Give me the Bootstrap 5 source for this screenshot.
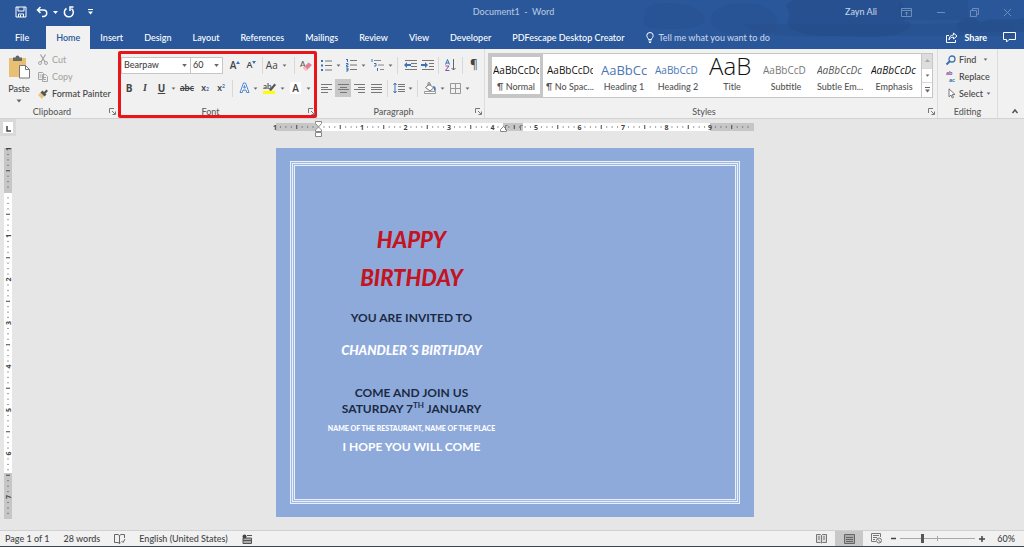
<!DOCTYPE html>
<html lang="en">
<head>
<meta charset="utf-8">
<meta name="viewport" content="width=device-width, initial-scale=1">
<title>Document1 - Word</title>
<link href="https://cdn.jsdelivr.net/npm/bootstrap@5.3.0/dist/css/bootstrap.min.css" rel="stylesheet">
<style>
:root{--ui:Lato,"Open Sans",sans-serif;--blue:#2a579a;--ink:#444;--accent:#3c72b4}
body{font:500 9px/12px var(--ui);color:var(--ink);background:#e6e6e6;overflow:hidden}
button,select,input{font:inherit;color:inherit}
button{padding:0;border:0;background:none;display:inline-flex;align-items:center;justify-content:center}
svg{display:block;flex:none;overflow:visible}
.topbar{background-color:var(--blue);color:#fff;position:relative}
.topbar>.deco{position:absolute;right:0;top:0;width:400px;height:49px;overflow:hidden}
.titlerow{height:24px;position:relative}
.quick{padding-left:15px;gap:5px}
.doctitle{color:#b4c6df}
.wincol{gap:24px;padding-right:12px;color:#6f8dba}
.wincol .user{color:#c4d3e8}
.tabrow{height:23px}
.tabrow .nav-link{color:#fff;padding:0 11px 0 10px;line-height:23px;border-radius:0;font-weight:500}
.tabrow .nav-link.active{background:#f1f1f1;color:#2a579a;font-weight:600;padding:0 10px}
.tabrow .nav-link.filetab{padding:0 17px 0 15px}
.titlerow+.tabrow{margin-top:2px}
.tell{color:#c4d3e8;gap:5px;padding-left:10px}
.ribbon{background:#f1f1f1;border-bottom:1px solid #d2d2d2;height:70px}
.grp{padding-top:7px;position:relative;border-right:1px solid #dcdcdc}
.grp-name{height:12px;line-height:12px;color:#5c5c5c;text-align:center;margin-top:auto;padding-right:14px}
.launch{position:absolute;right:2px;bottom:3px}
.tool{height:18px}
.toolrow2{margin-top:5px}
.w7{width:7px}.w11{width:11px}.w16{width:16px}.w17{width:17px}.w18{width:18px}.w20{width:20px}
.cut{color:#a6a6a6}
.cliprow{height:17px;gap:4px}
.vr-line{width:1px;height:17px;background:#d8d8d8;margin:0 3px}
.fontgrp{outline:3px solid #e8161b;outline-offset:-3px;border-radius:2px;border:0;padding:5px 3px 0;width:199px;margin:2px 0 0}
.combo{height:17px;padding:0 9px 0 2px;border:1px solid #c6c6c6;border-radius:0;color:#444;appearance:none;background:#fff url("data:image/svg+xml,%3Csvg xmlns='http://www.w3.org/2000/svg' viewBox='0 0 6 4'%3E%3Cpath d='M0 0h6L3 4z' fill='%23666'/%3E%3C/svg%3E") no-repeat right 3px center/5px 3px}
.combo-name{width:71px}.combo-size{width:33px;margin-left:-1px}
.pressed{background:#c8c8c8}
.glyph{font-family:"Open Sans",sans-serif;font-size:10px;font-weight:700}
.gallery{border:1px solid #c6c6c6;background:#fff;height:45px;margin:-3px 4px 0 3px}
.styleitem{flex:1 1 0;min-width:0;flex-direction:column;justify-content:flex-end;overflow:hidden;padding:0 4px}
.styleitem.on{box-shadow:inset 0 0 0 3px #c6c6c6}
.sample{font-family:"Open Sans",sans-serif;font-size:10px;line-height:20px;height:20px;width:100%;overflow:hidden;white-space:nowrap;color:#111;text-align:left}
.sname{line-height:14px;height:17px;white-space:nowrap;color:#555}
.sample-h{font-size:13px;color:#4a76b5}
.sample-h2{color:#4a76b5}
.sample-title{font-size:24px;height:24px;line-height:20px;font-weight:300}
.scrollcol{width:11px;border-left:1px solid #c6c6c6}
.scrollcol button{flex:1;border-bottom:1px solid #d8d8d8}
.editrow{height:17px;gap:3px}
.rulerrow{height:29px;padding-right:10px}
.corner{width:16px;height:17px;background:#d9d9d9;padding:3px}
.corner>span{width:10px;height:11px;background:#fff}
.leftcol{width:15px}
.sheetwidth{width:478px}
.sheet{width:478px;height:369px;background:#8eaadb;padding:13px 14px}
.frame-a,.frame-b,.frame-c{border:1px solid #e9f0fb;height:100%}
.frame-a,.frame-b{padding:1px;background:#a0b9e2}
.frame-c{background:#8eaadb}
.invite{width:234px;text-align:center;padding-top:55px;font-family:Lato,sans-serif;font-weight:700;color:#1b2a44;white-space:nowrap}
.brush{font-style:italic;font-weight:900}
.big{font-size:22px;line-height:38px;color:#c3141f}
.line12{font-size:12px;line-height:16px}
.line13{font-size:13px;line-height:16px}
.tiny{font-size:7px;line-height:22px;font-weight:900}
.gap-s{margin-top:13px}
.gap-l{margin-top:27px}
.white{color:#fff}
.invite sup{font-size:8px;top:-5px}
.status{height:17px;background:#f1f1f1;border-top:1px solid #d0d0d0;border-bottom:1px solid #3b4450;padding:0 9px 0 5px;gap:14px}
.zoomer{width:75px;height:11px;appearance:none;background:linear-gradient(#a8a8a8,#a8a8a8) center/100% 1px no-repeat,linear-gradient(#a8a8a8,#a8a8a8) center/1px 5px no-repeat;margin:0}
.zoomer::-webkit-slider-thumb{appearance:none;width:3px;height:9px;background:#555}
</style>
</head>
<body class="d-flex flex-column vh-100">

<svg width="0" height="0" class="position-absolute">
 <symbol id="dd" viewBox="0 0 6 4"><path d="M.5.5h5L3 3.5z" fill="#666"/></symbol>
 <symbol id="launch" viewBox="0 0 7 7"><path d="M.5 5V.5H5M3 3l3 3M6.500 3.500v3h-3" fill="none" stroke="#777"/></symbol>
</svg>

<header class="topbar">
 <svg class="deco" viewBox="0 0 400 49" aria-hidden="true" fill="#254d88">
  <path opacity=".3" d="M22 8c10-8 40-6 52 2s8 16-8 18-48 2-46-6zM90 12c10-12 52-12 60 2s-2 22-26 22-46-10-34-24z"/>
  <path opacity=".65" d="M170 0h104c8 6 10 14 6 22 8-2 10 6 0 10-20 8-50 4-76 4s-38-6-40-12 4-8 0-14 0-8 6-10z"/>
  <path opacity=".35" d="M120 24h180c30 0 60-4 90-2v14H210c-30 2-80 0-90-12zM274 0h70v20h-66z"/>
  <path opacity=".6" d="M334 24c4-8 16-8 22-2 14-6 30 0 44-4v14h-60c-6 0-8-4-6-8z"/>
 </svg>
 <div class="titlerow d-flex align-items-center">
  <div class="quick d-flex align-items-center col">
   <button aria-label="Save"><svg width="12" height="12" viewBox="0 0 12 12" fill="none" stroke="#fff"><path d="M1 1h10v10H1zM3 1v4h6V1M3.500 11V8h5v3M5.500 9v2"/></svg></button>
   <button aria-label="Undo" class="ms-1"><svg width="12" height="12" viewBox="0 0 12 12" fill="none" stroke="#fff" stroke-width="1.500"><path d="M4.500 1 1.500 4l3 3M2 4h5.500a3 3 0 0 1 0 6.500H6"/></svg></button>
   <svg width="5" height="3"><path d="M0 0h5L2.500 3z" fill="#fff"/></svg>
   <button aria-label="Redo"><svg width="12" height="12" viewBox="0 0 12 12" fill="none" stroke="#fff" stroke-width="1.500"><path d="M3.500 2.500a4.500 4.500 0 1 0 5 .2M10.500 1H7v4"/></svg></button>
   <button aria-label="Customize" class="ms-2"><svg width="5" height="6"><path d="M0 0h5v1H0zM0 2.500h5L2.500 5.500z" fill="#fff"/></svg></button>
  </div>
  <div class="doctitle">Document1 &nbsp;-&nbsp; Word</div>
  <div class="wincol d-flex align-items-center justify-content-end col">
   <span class="user">Zayn Ali</span>
   <button aria-label="Ribbon display"><svg width="11" height="9" fill="none" stroke="currentColor"><path d="M.5.500h10v8H.5zM.5 2.500h10M5.500 7.500V4M4 5.500l1.500-1.500L7 5.500"/></svg></button>
   <button aria-label="Minimize"><svg width="10" height="9" stroke="currentColor"><path d="M1 4.500h8"/></svg></button>
   <button aria-label="Restore"><svg width="9" height="9" fill="none" stroke="currentColor"><path d="M.5 2.500h6v6h-6zM2.500 2.500v-2h6v6h-2"/></svg></button>
   <button aria-label="Close"><svg width="9" height="9" stroke="currentColor"><path d="m1 1 7 7M8 1 1 8"/></svg></button>
  </div>
 </div>
 <nav class="tabrow nav flex-nowrap align-items-center position-relative">
  <a class="nav-link filetab" href="#">File</a>
  <a class="nav-link active" href="#">Home</a>
  <a class="nav-link" href="#">Insert</a>
  <a class="nav-link" href="#">Design</a>
  <a class="nav-link" href="#">Layout</a>
  <a class="nav-link" href="#">References</a>
  <a class="nav-link" href="#">Mailings</a>
  <a class="nav-link" href="#">Review</a>
  <a class="nav-link" href="#">View</a>
  <a class="nav-link" href="#">Developer</a>
  <a class="nav-link" href="#">PDFescape Desktop Creator</a>
  <button class="tell"><svg width="8" height="11" viewBox="0 0 8 11" fill="none" stroke="#fff"><path d="M2.500 7.500C2.500 6 .8 5.500.8 3.700a3.200 3.200 0 0 1 6.400 0C7.200 5.500 5.500 6 5.500 7.500zM2.500 9h3M3 10.500h2"/></svg>Tell me what you want to do</button>
  <div class="ms-auto d-flex align-items-center gap-3 pe-2">
   <button class="gap-1 fw-bold"><svg width="12" height="11" viewBox="0 0 12 11" fill="none" stroke="#fff"><path d="M3 3.500H.5v7h9V8M7.500 1l3.500 3-3.500 3V5.200C5 5 4 6 3 8c0-3 1.500-5 4.500-5z"/></svg>&nbsp;Share</button>
   <button aria-label="Comments"><svg width="13" height="11" viewBox="0 0 13 11" fill="none" stroke="#fff"><path d="M.5.500h12v7H6L3.500 10V7.500h-3z"/></svg></button>
  </div>
 </nav>
</header>

<section class="ribbon d-flex">
 <div class="grp d-flex flex-column border-0 pb-0" style="width:118px">
  <div class="d-flex ps-2">
   <button class="flex-column gap-1" style="width:22px"><svg width="22" height="23" viewBox="0 0 22 23"><path d="M1 2h17v19H1z" fill="#e9c073"/><path d="M5 1.500h2.500a2 2 0 0 1 4 0H14V5H5z" fill="#666"/><path d="M11.500 9.500h6l4 4v8.500h-10z" fill="#fff" stroke="#777"/><path d="M17.500 9.500v4h4" fill="none" stroke="#777"/></svg>Paste<svg width="6" height="4"><use href="#dd"/></svg></button>
   <div class="ms-2" style="margin-top:-5px">
    <button class="cliprow cut d-flex"><svg width="10" height="11" viewBox="0 0 10 11" fill="none" stroke="#a6a6a6"><circle cx="2" cy="9" r="1.500"/><circle cx="8" cy="9" r="1.500"/><path d="m3 8 4.500-7.500M7 8 2.500.5" stroke-width="1.300"/></svg>Cut</button>
    <button class="cliprow cut d-flex"><svg width="10" height="10" viewBox="0 0 10 10" fill="#f1f1f1" stroke="#a6a6a6"><path d="M.5.500h4l1 1v6h-5zM4.500 2.500h3l2 2v5h-5zM6 5.500h2M6 7.500h2M1.500 3h2M1.500 5h2"/></svg>Copy</button>
    <button class="cliprow d-flex text-nowrap"><svg width="10" height="10" viewBox="0 0 10 10"><path d="m0 6 3-3 3.500 3.500L4 10z" fill="#ecc67c"/><path d="m2.500 3.500 2-2L6 3l2.500-2.500L10 2 7.500 4.500 8.500 5.500l-2 2z" fill="#555"/></svg>Format Painter</button>
   </div>
  </div>
  <div class="grp-name">Clipboard</div>
  <svg class="launch" width="7" height="7"><use href="#launch"/></svg>
 </div>

 <div class="grp fontgrp d-flex flex-column">
  <div class="d-flex align-items-center tool">
   <select class="combo combo-name" aria-label="Font"><option>Bearpaw</option></select>
   <select class="combo combo-size" aria-label="Font size"><option>60</option></select>
   <button class="w17 glyph fw-semibold ms-1" aria-label="Grow font">A<svg width="4" height="9"><path d="M0 3h4L2 0z" fill="#3c72b4"/></svg></button>
   <button class="w16 glyph fw-semibold" aria-label="Shrink font"><small style="font-size:9px">A</small><svg width="4" height="9"><path d="M0 0h4L2 3z" fill="#3c72b4"/></svg></button>
   <i class="vr-line"></i>
   <button class="gap-1 w20 glyph fw-normal" aria-label="Change case">Aa<svg width="5" height="3"><use href="#dd"/></svg></button>
   <i class="vr-line ms-2"></i>
   <button class="w16" aria-label="Clear formatting"><svg width="12" height="11" viewBox="0 0 12 11"><text x="0" y="7" font-size="8" fill="#555">A</text><path d="m3 8 5.500-5.500L12 5 6.500 10.500z" fill="#e47f93"/><path d="m3 8 1.500-1.500 3 2.500-1.500 1.500H5z" fill="#f4bfc8"/></svg></button>
  </div>
  <div class="d-flex align-items-center tool toolrow2">
   <button class="w16 glyph">B</button><button class="w16 glyph fst-italic" style="font-family:'Liberation Serif'">I</button><button class="w17 glyph text-decoration-underline">U</button><button class="w7" aria-label="Underline style"><svg width="5" height="3"><use href="#dd"/></svg></button>
   <button class="w20 text-decoration-line-through fw-bold">abc</button><button class="w16 fw-bold"><span>x</span><sub style="font-size:5px;color:#3c72b4">2</sub></button><button class="w16 fw-bold"><span>x</span><sup style="font-size:5px;color:#3c72b4">2</sup></button>
   <i class="vr-line"></i>
   <button class="w16" aria-label="Text effects"><svg width="11" height="12" viewBox="0 0 11 12"><path d="M1 10.500 4.500 1h2L10 10.500H7.700L7 8H4l-.7 2.500zM4.700 6h1.600L5.500 3.400z" fill="#fff" stroke="#4a86cc"/></svg></button><button class="w7" aria-label="Effects menu"><svg width="5" height="3"><use href="#dd"/></svg></button>
   <button class="w20" aria-label="Highlight"><svg width="13" height="12" viewBox="0 0 13 12"><text x="0" y="7" font-size="8" font-weight="700" fill="#555">ab</text><path d="m6 8 5.500-6.500L13 3 8 9z" fill="#555"/><path d="M0 9h12v3H0z" fill="#ff0"/></svg></button><button class="w7" aria-label="Highlight menu"><svg width="5" height="3"><use href="#dd"/></svg></button>
   <button class="w11 glyph fw-semibold bg-white mx-1" aria-label="Font colour">A</button><button class="w7" aria-label="Font colour menu"><svg width="5" height="3"><use href="#dd"/></svg></button>
  </div>
  <div class="grp-name">Font</div>
  <svg class="launch" width="7" height="7"><use href="#launch"/></svg>
 </div>

 <div class="grp d-flex flex-column" style="width:168px">
  <div class="d-flex align-items-center tool">
   <button class="w18" aria-label="Bullets"><svg width="11" height="11" viewBox="0 0 11 11"><path d="M0 0h2v2H0zM0 4.500h2v2H0zM0 9h2v2H0z" fill="#3c72b4"/><path d="M4 1h7M4 5.500h7M4 10h7" stroke="#777"/></svg></button><button class="w7" aria-label="Bullets menu"><svg width="5" height="3"><use href="#dd"/></svg></button>
   <button class="w18" aria-label="Numbering"><svg width="11" height="12" viewBox="0 0 11 12"><path d="M1.500 0v3M0 .5h1.500M0 4.500h2v1.500H.5v1.500h2M0 9h2v3H0M.5 10.500H2" stroke="#3c72b4" fill="none"/><path d="M4 1.500h7M4 6h7M4 10.500h7" stroke="#777"/></svg></button><button class="w7" aria-label="Numbering menu"><svg width="5" height="3"><use href="#dd"/></svg></button>
   <button class="w20" aria-label="Multilevel list"><svg width="13" height="12" viewBox="0 0 13 12"><path d="M1 0v3M3 4.500h2V7H3M6.500 9v3" stroke="#3c72b4" fill="none"/><path d="M3 1.500h7M7 6h6M9 10.500h4" stroke="#888"/></svg></button><button class="w7" aria-label="Multilevel menu"><svg width="5" height="3"><use href="#dd"/></svg></button>
   <i class="vr-line"></i>
   <button class="w18" aria-label="Decrease indent"><svg width="13" height="10" viewBox="0 0 13 10"><path d="M1 .5h12M7 3.500h6M7 6.500h6M1 9.500h12" stroke="#777"/><path d="M7 4v2H3v2L0 5l3-3v2z" fill="#3c72b4"/></svg></button><button class="w16" aria-label="Increase indent"><svg width="13" height="10" viewBox="0 0 13 10"><path d="M1 .5h12M8 3.500h5M8 6.500h5M1 9.500h12" stroke="#777"/><path d="M0 4v2h4v2l3-3-3-3v2z" fill="#3c72b4"/></svg></button>
   <i class="vr-line"></i>
   <button class="w17" aria-label="Sort"><svg width="11" height="12" viewBox="0 0 11 12" fill="none"><path d="m.5 5.500 2-5 2 5M1 4h3" stroke="#3c72b4"/><path d="M.5 7h3.500L.5 11.500H4.500" stroke="#8a4fa8"/><path d="M8.500 0v11M6.500 9l2 2 2-2" stroke="#666"/></svg></button>
   <i class="vr-line"></i>
   <button class="w16 glyph fw-normal" style="font-size:12px">¶</button>
  </div>
  <div class="d-flex align-items-center tool toolrow2">
   <button class="w18" aria-label="Align left"><svg width="11" height="9" stroke="#777"><path d="M0 .5h11M0 3.500h7M0 5.500h11M0 8.500h7"/></svg></button><button class="w16 pressed align-self-stretch" aria-label="Centre"><svg width="11" height="9" stroke="#777"><path d="M0 .5h11M2 3.500h7M0 5.500h11M2 8.500h7"/></svg></button><button class="w17" aria-label="Align right"><svg width="11" height="9" stroke="#777"><path d="M0 .5h11M4 3.500h7M0 5.500h11M4 8.500h7"/></svg></button><button class="w16" aria-label="Justify"><svg width="11" height="9" stroke="#777"><path d="M0 .5h11M0 3.500h11M0 5.500h11M0 8.500h11"/></svg></button>
   <i class="vr-line"></i>
   <button class="w16" aria-label="Line spacing"><svg width="12" height="12" viewBox="0 0 12 12"><path d="M5 2.500h7M5 4.500h7M5 7.500h7M5 9.500h7" stroke="#777"/><path d="M2 1v10M.5 3 2 1l1.500 2M.5 9 2 11l1.500-2" stroke="#3c72b4" fill="none"/></svg></button><button class="w7" aria-label="Spacing menu"><svg width="5" height="3"><use href="#dd"/></svg></button>
   <i class="vr-line"></i>
   <button class="w18" aria-label="Shading"><svg width="13" height="12" viewBox="0 0 13 12"><path d="m1.500 5.500 4-3.500L9.500 6 6 9zM4 4V1.500a1 1 0 0 1 2 0V4" fill="#fff" stroke="#777"/><path d="M9 4c3 0 3 3 2.500 5-1 .5-1.500-1-1.500-2z" fill="#3c72b4"/><path d="M.5 9.500h11v2H.5z" fill="#fff" stroke="#999"/></svg></button><button class="w7" aria-label="Shading menu"><svg width="5" height="3"><use href="#dd"/></svg></button>
   <button class="w18" aria-label="Borders"><svg width="11" height="11" fill="none" stroke="#999"><path d="M.5.500h10v10H.5zM5.500.500v10M.5 5.500h10"/></svg></button><button class="w7" aria-label="Borders menu"><svg width="5" height="3"><use href="#dd"/></svg></button>
  </div>
  <div class="grp-name">Paragraph</div>
  <svg class="launch" width="7" height="7"><use href="#launch"/></svg>
 </div>

 <div class="grp d-flex flex-column flex-grow-1">
  <div class="gallery d-flex">
   <button class="styleitem on"><span class="sample">AaBbCcDc</span><span class="sname">¶ Normal</span></button>
   <button class="styleitem"><span class="sample">AaBbCcDc</span><span class="sname">¶ No Spac...</span></button>
   <button class="styleitem"><span class="sample sample-h">AaBbCc</span><span class="sname">Heading 1</span></button>
   <button class="styleitem"><span class="sample sample-h2">AaBbCcD</span><span class="sname">Heading 2</span></button>
   <button class="styleitem"><span class="sample sample-title">AaB</span><span class="sname">Title</span></button>
   <button class="styleitem"><span class="sample" style="color:#777">AaBbCcD</span><span class="sname">Subtitle</span></button>
   <button class="styleitem"><span class="sample fst-italic" style="color:#555">AaBbCcDc</span><span class="sname">Subtle Em...</span></button>
   <button class="styleitem"><span class="sample fst-italic">AaBbCcDc</span><span class="sname">Emphasis</span></button>
   <div class="scrollcol d-flex flex-column">
    <button aria-label="Scroll up" style="background:#ddd"><svg width="5" height="3"><path d="M0 3h5L2.500 0z" fill="#aaa"/></svg></button>
    <button aria-label="Scroll down"><svg width="5" height="3"><use href="#dd"/></svg></button>
    <button aria-label="More styles" class="border-0"><svg width="5" height="6"><path d="M0 0h5v1H0zM0 2.500h5L2.500 5.500z" fill="#666"/></svg></button>
   </div>
  </div>
  <div class="grp-name">Styles</div>
  <svg class="launch" width="7" height="7"><use href="#launch"/></svg>
 </div>

 <div class="grp d-flex flex-column" style="width:60px">
  <div class="ps-2" style="margin-top:-5px">
   <button class="editrow d-flex"><svg width="10" height="10" viewBox="0 0 10 10" fill="none" stroke="#3c72b4" stroke-width="1.300"><circle cx="6" cy="4" r="3"/><path d="M4 6 .5 9.500" stroke-width="2"/></svg>Find<svg class="ms-1" width="5" height="3"><use href="#dd"/></svg></button>
   <button class="editrow d-flex"><svg width="10" height="11" viewBox="0 0 10 11" font-size="6" font-weight="900"><text x="0" y="4" fill="#8a4fa8">ab</text><text x="3" y="11" fill="#3c72b4">ac</text></svg>Replace</button>
   <button class="editrow d-flex"><svg width="10" height="11" viewBox="0 0 10 11"><path d="M3 .8v8l2-1.800 1.300 3 1.200-.6L6.300 6.500H9z" fill="#fff" stroke="#777"/></svg>Select<svg width="5" height="3"><use href="#dd"/></svg></button>
  </div>
  <div class="grp-name p-0">Editing</div>
 </div>
 <div class="d-flex align-items-end justify-content-center pb-1" style="width:26px"><button aria-label="Collapse ribbon" class="ms-2"><svg width="6" height="5" fill="none" stroke="#555" stroke-width="1.500"><path d="m.5 4 2.500-3 2.500 3"/></svg></button></div>
</section>

<main class="flex-grow-1 d-flex flex-column">
 <div class="rulerrow d-flex">
  <div class="corner d-flex"><span class="d-flex align-items-end justify-content-center"><svg width="5" height="8"><path d="M1 1v5h4" fill="none" stroke="#444" stroke-width="1.500"/></svg></span></div>
  <div class="flex-grow-1 d-flex justify-content-center"><svg id="hruler" class="sheetwidth" height="20"></svg></div>
 </div>
 <div class="d-flex flex-grow-1" style="padding-right:10px">
  <div class="leftcol"><svg id="vruler" width="15" height="371"></svg></div>
  <div class="flex-grow-1 d-flex justify-content-center align-items-start">
   <article class="sheet">
    <div class="frame-a"><div class="frame-b"><div class="frame-c">
     <div class="invite">
      <div class="brush big">HAPPY</div>
      <div class="brush big">BIRTHDAY</div>
      <div class="line12 gap-s">YOU ARE INVITED TO</div>
      <div class="brush line13 white mt-3">CHANDLER´S BIRTHDAY</div>
      <div class="line12 gap-l">COME AND JOIN US</div>
      <div class="line12">SATURDAY 7<sup>TH</sup> JANUARY</div>
      <div class="tiny white">NAME OF THE RESTAURANT, NAME OF THE PLACE</div>
      <div class="line12 white">I HOPE YOU WILL COME</div>
     </div>
    </div></div></div>
   </article>
  </div>
 </div>
</main>

<footer class="status d-flex align-items-center">
 <span>Page 1 of 1</span><span>28 words</span>
 <svg width="11" height="10" fill="none" stroke="#666"><path d="M5.500 9.500v-8L4 .5H.5v8H4l1.500 1 1-.7M5.500 1.500l1.500-1h3.500V4M7.500 7l1.500 1.500L11 5"/></svg>
 <span>English (United States)</span>
 <svg width="10" height="10"><path d="M1 4h8.500v5.500H1z" fill="#aaa" stroke="#555"/><path d="M5 1.500h5M1 6.500h8" stroke="#555"/><circle cx="2.500" cy="2.500" r="2" fill="#444"/></svg>
 <div class="ms-auto d-flex align-items-center align-self-stretch">
  <button aria-label="Read mode" class="me-2"><svg width="11" height="9" fill="#ddd" stroke="#777"><path d="M.5.500h4l1 1 1-1h4v8h-4l-1 .5-1-.5h-4zM5.500 1.500v7M2 3h2M2 5h2M7 3h2M7 5h2"/></svg></button>
  <button aria-label="Print layout" class="pressed align-self-stretch" style="width:28px"><svg width="11" height="10" fill="#aaa" stroke="#666"><path d="M.5.500h10v9H.5zM2 3.500h7M2 5.500h7M2 7.500h7"/></svg></button>
  <button aria-label="Web layout" class="ms-2 me-2"><svg width="12" height="11" fill="none" stroke="#777"><path d="M5 8.500H.5v-8h9V4M2 2.500h6M2 4.500h4M2 6.500h2"/><circle cx="8" cy="7.500" r="2.500"/><path d="m6.500 6 3 3"/></svg></button>
  <button aria-label="Zoom out"><svg width="5" height="5"><path d="M0 2.500h5" stroke="#444" stroke-width="1.500"/></svg></button>
  <input class="zoomer mx-1" type="range" min="10" max="180" value="60" aria-label="Zoom">
  <button aria-label="Zoom in"><svg width="6" height="6"><path d="M0 3h6M3 0v6" stroke="#444" stroke-width="1.500"/></svg></button>
  <span class="ps-2 ms-1">60%</span>
 </div>
</footer>

<script src="https://cdn.jsdelivr.net/npm/bootstrap@5.3.0/dist/js/bootstrap.bundle.min.js"></script>
<script>
// Both rulers: one inch at 60% zoom is 43.5 units, divided into eighths.
const INCH = 43.5;
function ruler(origin, length, vertical, top) {
  let s = '';
  for (let k = -8; k < 90; k++) {
    const p = origin + k * INCH / 8;
    if (k === 0 || p > length - 3) continue;
    if (k % 8 === 0) {
      const n = Math.abs(k / 8);
      s += vertical
        ? `<text transform="translate(${top + 7} ${p}) rotate(-90)" text-anchor="middle">${n}</text>`
        : `<text x="${p}" y="${top + 7}" text-anchor="middle">${n}</text>`;
      continue;
    }
    const h = k % 4 === 0 ? 4 : 1, a = top + 4 - h / 2;
    s += vertical ? `<rect x="${a}" y="${p - .5}" width="${h}" height="1"/>`
                  : `<rect x="${p - .5}" y="${a}" width="1" height="${h}"/>`;
  }
  return s;
}
const style = 'fill="#444" font-size="7" font-weight="700" font-family="Open Sans"';
document.getElementById('hruler').innerHTML =
  '<path fill="#fff" d="M0 4h478v8H0z"/><path fill="#c6c6c6" d="M0 4h42v8H0zM227 4h20v8h-20zM434 4h44v8h-44z"/>' +
  `<g ${style}>` + ruler(42.5, 478, false, 4) + '</g>' +
  '<path fill="#fff" stroke="#888" d="M39.500 2.500h6v2l-3 3.500-3-3.500zM42.500 8l3 3v1.500h-6V11zM39.500 13.500h6v4h-6zM227.500 7.500l3 3v2h-6v-2z"/>' +
  '<path fill="none" stroke="#777" d="M229.500 11V6.500h2M244.500 11V6.500h2"/>';
document.getElementById('vruler').innerHTML =
  '<path fill="#fff" d="M4 0h8v370H4z"/><path fill="#c6c6c6" d="M4 0h8v45H4zM4 325h8v46H4z"/>' +
  `<g ${style}>` + ruler(44.5, 371, true, 4) + '</g>';
</script>
</body>
</html>
